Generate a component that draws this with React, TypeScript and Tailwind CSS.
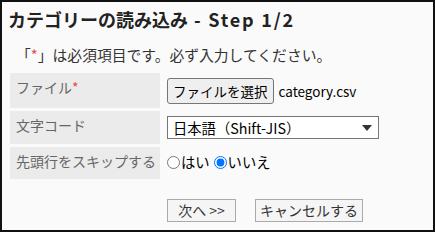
const font = "font-['Meiryo','Noto_Sans_CJK_JP',sans-serif]";

const Label = ({ children, h }: { children: React.ReactNode; h: string }) => (
  <div className={`bg-[#ebebeb] text-[#666] text-[14px] leading-[20px] pl-[6px] pt-[4px] ${h}`}>
    {children}
  </div>
);

export default function App() {
  return (
    <div className={`w-[435px] h-[232px] border-2 border-[#111] bg-[#fafafa] text-[#333] ${font}`}>
      <h1 className="pl-[6px] pt-[5px] text-[18px] leading-[24px] font-bold text-[#222]">
        カテゴリーの読み込み<span className="tracking-[1.8px]"> - Step 1/2</span>
      </h1>

      <p className="mt-[14px] pl-[14px] text-[14.8px] leading-[20px]">
        「<span className="text-[#e5484d]">*</span>」は必須項目です。必ず入力してください。
      </p>

      <div className="mt-[8px] ml-[8px] mr-[8px] grid grid-cols-[150px_1fr] gap-y-[3px] gap-x-[2px]">
        <Label h="h-[35px]">
          ファイル<span className="text-[#e5484d]">*</span>
        </Label>
        <div className="flex items-start pt-[5px] pl-[5px] gap-[5px]">
          <button className="h-[26px] px-[5px] border border-[#767676] rounded-[3px] bg-[#efefef] text-[13.5px] text-black">
            ファイルを選択
          </button>
          <span className="text-[13.5px] leading-[26px] text-black">category.csv</span>
        </div>

        <Label h="h-[33px]">文字コード</Label>
        <div className="pt-[5px] pl-[5px]">
          <div className="relative w-[212px] h-[23px] border border-[#767676] bg-white flex items-center pl-[5px] text-[14.3px] text-black">
            日本語（Shift-JIS）
            <svg className="absolute right-[6px] top-[8px]" width="10" height="6" viewBox="0 0 10 6">
              <path d="M0 0h10L5 6z" fill="#333" />
            </svg>
          </div>
        </div>

        <Label h="h-[32px]">先頭行をスキップする</Label>
        <div className="flex items-center pl-[5px] pb-[2px] text-[14.3px] text-black">
          <input type="radio" name="skip" className="m-0 w-[13px] h-[13px]" />
          <span className="ml-[1px]">はい</span>
          <input type="radio" name="skip" defaultChecked className="ml-[4px] m-0 w-[13px] h-[13px]" />
          <span className="ml-[1px]">いいえ</span>
        </div>
      </div>

      <div className="mt-[20px] ml-[165px] flex gap-[19px]">
        <button className="h-[23px] w-[69px] border border-[#aaa] bg-[#f5f5f5] text-[14px] text-[#333]">
          次へ &gt;&gt;
        </button>
        <button className="h-[23px] w-[108px] border border-[#aaa] bg-[#f5f5f5] text-[14px] text-[#333]">
          キャンセルする
        </button>
      </div>
    </div>
  );
}
